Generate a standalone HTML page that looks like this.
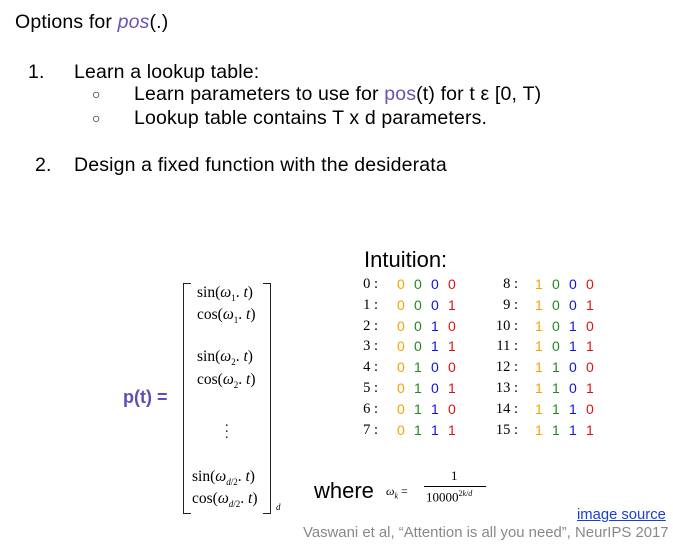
<!DOCTYPE html>
<html><head><meta charset="utf-8"><style>
body{margin:0;width:673px;height:549px;background:#fff;position:relative;overflow:hidden;font-family:"Liberation Sans",sans-serif;color:#000}
.a{position:absolute;white-space:nowrap}
.t{font-size:19.5px;letter-spacing:0.15px}
.s{font-family:"Liberation Serif",serif;font-size:15.5px}
.p{color:#6b52b5;font-style:italic}
.o{color:#f5a300}.g{color:#1e8a1e}.b{color:#1010e0}.r{color:#e01010}
.d span{display:inline-block;width:17px;text-align:left}
.lab{width:30px;text-align:right}
</style></head><body>
<div class="a t" style="left:15px;top:11px">Options for <span class="p">pos</span>(.)</div>
<div class="a t" style="left:28px;top:61px">1.</div>
<div class="a t" style="left:74px;top:61px">Learn a lookup table:</div>
<div class="a" style="left:92px;top:86px;font-size:14px">○</div>
<div class="a t" style="left:134px;top:83px;letter-spacing:0.15px">Learn parameters to use for <span class="p" style="font-style:normal">pos</span>(t) for t ε [0, T)</div>
<div class="a" style="left:92px;top:110px;font-size:14px">○</div>
<div class="a t" style="left:134px;top:107px;letter-spacing:0.15px">Lookup table contains T x d parameters.</div>
<div class="a t" style="left:35px;top:154px">2.</div>
<div class="a t" style="left:74px;top:154px;letter-spacing:0.15px">Design a fixed function with the desiderata</div>

<div class="a" style="left:123px;top:387px;font-size:18px;font-weight:bold;color:#5e4fb6">p(t) =</div>
<div class="a" style="left:183px;top:283px;width:7px;height:229px;border:1.5px solid #222;border-right:none"></div>
<div class="a" style="left:263px;top:283px;width:7px;height:229px;border:1.5px solid #222;border-left:none"></div>
<div class="a s" style="left:276px;top:502px;font-size:9px;font-style:italic">d</div>
<div class="a s" style="left:197px;top:284px">sin(<i>ω</i><sub style="font-size:9px">1</sub>. <i>t</i>)</div>
<div class="a s" style="left:197px;top:306px">cos(<i>ω</i><sub style="font-size:9px">1</sub>. <i>t</i>)</div>
<div class="a s" style="left:197px;top:348px">sin(<i>ω</i><sub style="font-size:9px">2</sub>. <i>t</i>)</div>
<div class="a s" style="left:197px;top:371px">cos(<i>ω</i><sub style="font-size:9px">2</sub>. <i>t</i>)</div>
<div class="a s" style="left:225px;top:420px;line-height:6px;font-size:14px">.<br>.<br>.</div>
<div class="a s" style="left:192px;top:468px">sin(<i>ω</i><sub style="font-size:9px"><i>d</i>/2</sub>. <i>t</i>)</div>
<div class="a s" style="left:192px;top:490px">cos(<i>ω</i><sub style="font-size:9px"><i>d</i>/2</sub>. <i>t</i>)</div>

<div class="a" style="left:364px;top:247px;font-size:22px">Intuition:</div>
<div class="a" id="tbl" style="left:348px;top:276px"></div>

<div class="a" style="left:314px;top:478px;font-size:22px">where</div>
<div class="a s" style="left:386px;top:484px;font-size:12px"><i>ω<sub style="font-size:8px">k</sub></i> =</div>
<div class="a s" style="left:451px;top:468px;font-size:13px">1</div>
<div class="a" style="left:424px;top:486px;width:62px;border-top:1px solid #000"></div>
<div class="a s" style="left:426px;top:489px;font-size:13px">10000<sup style="font-size:8px">2<i>k</i>/<i>d</i></sup></div>

<div class="a" style="left:577px;top:507px;font-size:14.8px;color:#1a3fd0;text-decoration:underline">image source</div>
<div class="a" style="left:303px;top:525px;font-size:14.9px;color:#888">Vaswani et al, “Attention is all you need”, NeurIPS 2017</div>
<script>
var h='',c=['o','g','b','r'];
for(var i=0;i<8;i++){
 var y=i*20.8;
 function row(n,x,lx){var s='<div class="a s lab" style="font-size:14.5px;left:'+lx+'px;top:'+y+'px">'+n+' :</div><div class="a d" style="left:'+x+'px;top:'+y+'px;font-size:14px">';
  for(var k=3;k>=0;k--){s+='<span class="'+c[3-k]+'">'+((n>>k)&1)+'</span>';}return s+'</div>';}
 h+=row(i,49,0)+row(i+8,187,140);
}
document.getElementById('tbl').innerHTML=h;
</script>
</body></html>
